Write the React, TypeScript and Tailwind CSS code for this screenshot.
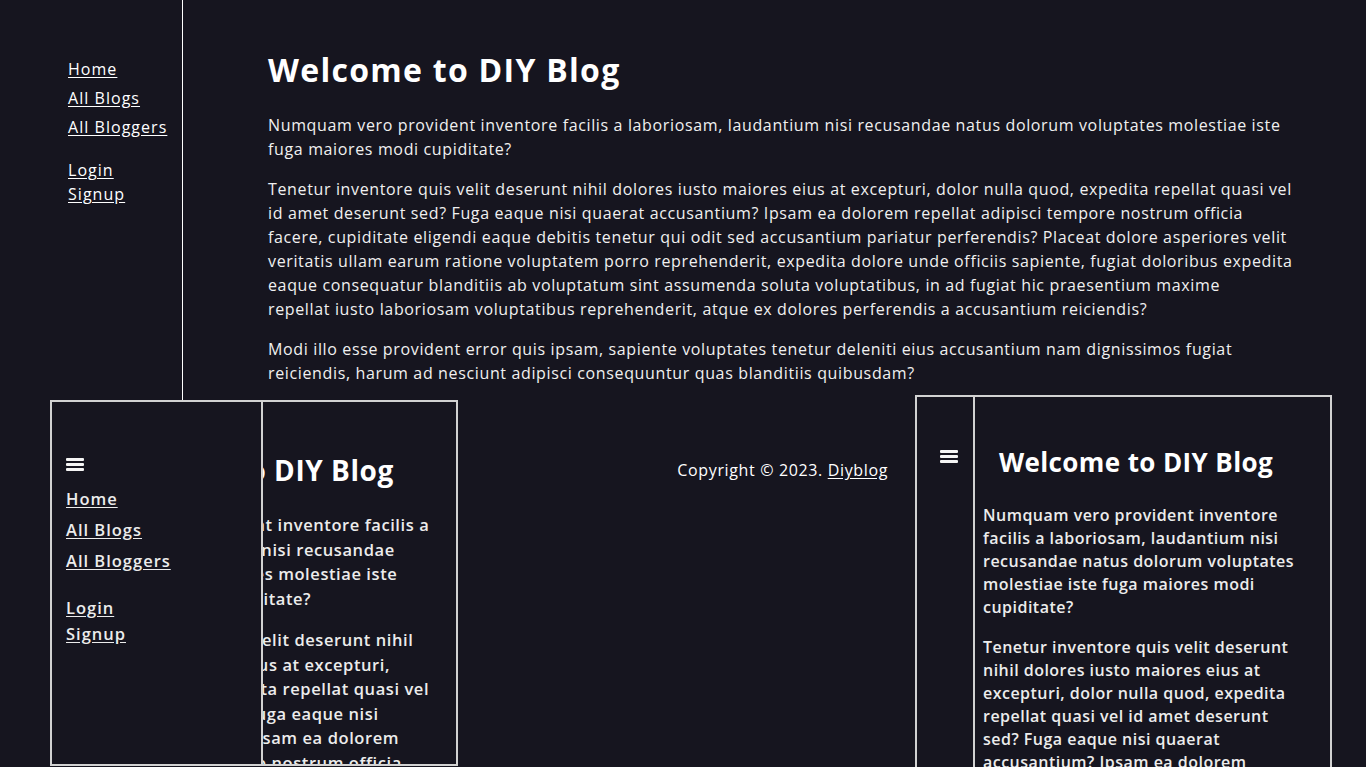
const font = "font-['Open_Sans','Liberation_Sans',sans-serif]";

const p1 =
  "Numquam vero provident inventore facilis a laboriosam, laudantium nisi recusandae natus dolorum voluptates molestiae iste fuga maiores modi cupiditate?";
const p2a =
  "Tenetur inventore quis velit deserunt nihil dolores iusto maiores eius at excepturi, dolor nulla quod, expedita repellat quasi vel id amet deserunt sed? Fuga eaque nisi quaerat accusantium? Ipsam ea dolorem repellat adipisci tempore nostrum officia facere, cupiditate eligendi eaque debitis tenetur qui odit sed accusantium pariatur perferendis? Placeat dolore asperiores velit veritatis ullam earum ratione voluptatem porro reprehenderit, expedita dolore unde officiis sapiente, fugiat doloribus expedita eaque consequatur blanditiis ab voluptatum sint assumenda soluta voluptatibus, in ad fugiat hic praesentium maxime";
const p2b =
  "repellat iusto laboriosam voluptatibus reprehenderit, atque ex dolores perferendis a accusantium reiciendis?";
const p3 =
  "Modi illo esse provident error quis ipsam, sapiente voluptates tenetur deleniti eius accusantium nam dignissimos fugiat reiciendis, harum ad nesciunt adipisci consequuntur quas blanditiis quibusdam?";

// wrapped lines as they appear in the two phone screenshots
const leftShotLines = [
  [
    "Numquam vero provident inventore facilis a",
    "laboriosam, laudantium nisi recusandae",
    "natus dolorum voluptates molestiae iste",
    "fuga maiores modi cupiditate?",
  ],
  [
    "Tenetur inventore quis velit deserunt nihil",
    "dolores iusto maiores eius at excepturi,",
    "dolor nulla quod, expedita repellat quasi vel",
    "id amet deserunt sed? Fuga eaque nisi",
    "quaerat accusantium? Ipsam ea dolorem",
    "repellat adipisci tempore nostrum officia",
  ],
];

const rightShotLines = [
  [
    "Numquam vero provident inventore",
    "facilis a laboriosam, laudantium nisi",
    "recusandae natus dolorum voluptates",
    "molestiae iste fuga maiores modi",
    "cupiditate?",
  ],
  [
    "Tenetur inventore quis velit deserunt",
    "nihil dolores iusto maiores eius at",
    "excepturi, dolor nulla quod, expedita",
    "repellat quasi vel id amet deserunt",
    "sed? Fuga eaque nisi quaerat",
    "accusantium? Ipsam ea dolorem",
  ],
];

function Burger() {
  return (
    <svg width="18" height="13" viewBox="0 0 18 13" fill="#f5f5f5">
      <rect x="0" y="0" width="18" height="3" rx="1" />
      <rect x="0" y="5" width="18" height="3" rx="1" />
      <rect x="0" y="10" width="18" height="3" rx="1" />
    </svg>
  );
}

function LeftShot() {
  return (
    <div className="relative w-[408px] h-[366px] border-2 border-[#d2d2d2] overflow-hidden bg-[#16151f]">
      <div className="absolute left-[-30px] top-[50px] w-[470px]">
        <h2 className="text-[28px] font-bold leading-9 text-white tracking-[0.02em] whitespace-nowrap pl-[74px]">
          Welcome to DIY Blog
        </h2>
        <div className="mt-[25px] ml-[31px] text-[16.5px] font-semibold leading-[24.5px] tracking-[0.035em] text-[#ececec]">
          {leftShotLines.map((lines, i) => (
            <p key={i} className="mb-[17px]">
              {lines.map((l) => (
                <span key={l} className="block whitespace-nowrap">
                  {l}
                </span>
              ))}
            </p>
          ))}
        </div>
      </div>
      <div className="absolute left-0 top-0 bottom-0 w-[211px] border-r-2 border-[#d2d2d2] bg-[#16151f] pl-[14px] pt-[56px]">
        <Burger />
        <ul className="mt-[16px] flex flex-col gap-[7px] text-[16.5px] font-semibold leading-6 tracking-[0.06em] text-[#ececec]">
          <li><a href="#" className="underline underline-offset-2">Home</a></li>
          <li><a href="#" className="underline underline-offset-2">All Blogs</a></li>
          <li><a href="#" className="underline underline-offset-2">All Bloggers</a></li>
        </ul>
        <ul className="mt-[23px] flex flex-col gap-[2px] text-[16.5px] font-semibold leading-6 tracking-[0.06em] text-[#ececec]">
          <li><a href="#" className="underline underline-offset-2">Login</a></li>
          <li><a href="#" className="underline underline-offset-2">Signup</a></li>
        </ul>
      </div>
    </div>
  );
}

function RightShot() {
  return (
    <div className="flex w-[417px] h-[380px] -mt-[5px] mr-[34px] border-2 border-[#d2d2d2] border-b-0 overflow-hidden bg-[#16151f]">
      <div className="w-[58px] shrink-0 border-r-2 border-[#d2d2d2] flex justify-center pl-[8px] pt-[53px]">
        <Burger />
      </div>
      <div className="flex-1 pl-[8px] pt-[47px]">
        <h2 className="text-[26px] font-bold leading-9 text-white tracking-[0.015em] whitespace-nowrap pl-[16px]">
          Welcome to DIY Blog
        </h2>
        <div className="mt-[24px] text-[16px] font-semibold leading-[23px] tracking-[0.03em] text-[#ececec]">
          {rightShotLines.map((lines, i) => (
            <p key={i} className="mb-[17px]">
              {lines.map((l) => (
                <span key={l} className="block whitespace-nowrap">
                  {l}
                </span>
              ))}
            </p>
          ))}
        </div>
      </div>
    </div>
  );
}

export default function App() {
  return (
    <div className={`min-h-screen bg-[#16151f] text-white overflow-hidden ${font}`}>
      <div className="flex h-[400px]">
        <aside className="w-[183px] shrink-0 border-r border-white pl-[68px] pt-[57px]">
          <ul className="flex flex-col gap-[5px] text-base leading-6 tracking-[0.065em]">
            <li><a href="#" className="underline underline-offset-2">Home</a></li>
            <li><a href="#" className="underline underline-offset-2">All Blogs</a></li>
            <li><a href="#" className="underline underline-offset-2">All Bloggers</a></li>
          </ul>
          <ul className="mt-[19px] flex flex-col text-base leading-6 tracking-[0.065em]">
            <li><a href="#" className="underline underline-offset-2">Login</a></li>
            <li><a href="#" className="underline underline-offset-2">Signup</a></li>
          </ul>
        </aside>
        <main className="flex-1 pl-[85px] pr-[68px] pt-[50px]">
          <h1 className="text-[32px] font-bold leading-10 tracking-[0.04em] mb-[23px]">Welcome to DIY Blog</h1>
          <p className="mb-4 text-base leading-6 tracking-[0.04em] text-[#f0f0f0]">{p1}</p>
          <p className="mb-4 text-base leading-6 tracking-[0.04em] text-[#f0f0f0]">
            {p2a}
            <br />
            {p2b}
          </p>
          <p className="mb-4 text-base leading-6 tracking-[0.04em] text-[#f0f0f0]">{p3}</p>
        </main>
      </div>
      <footer className="flex items-start pl-[50px]">
        <LeftShot />
        <div className="flex-1 flex justify-end pr-[27px] pt-[58px]">
          <p className="text-base leading-6 tracking-[0.04em]">
            Copyright © 2023.{" "}
            <a href="#" className="underline underline-offset-2">Diyblog</a>
          </p>
        </div>
        <RightShot />
      </footer>
    </div>
  );
}
